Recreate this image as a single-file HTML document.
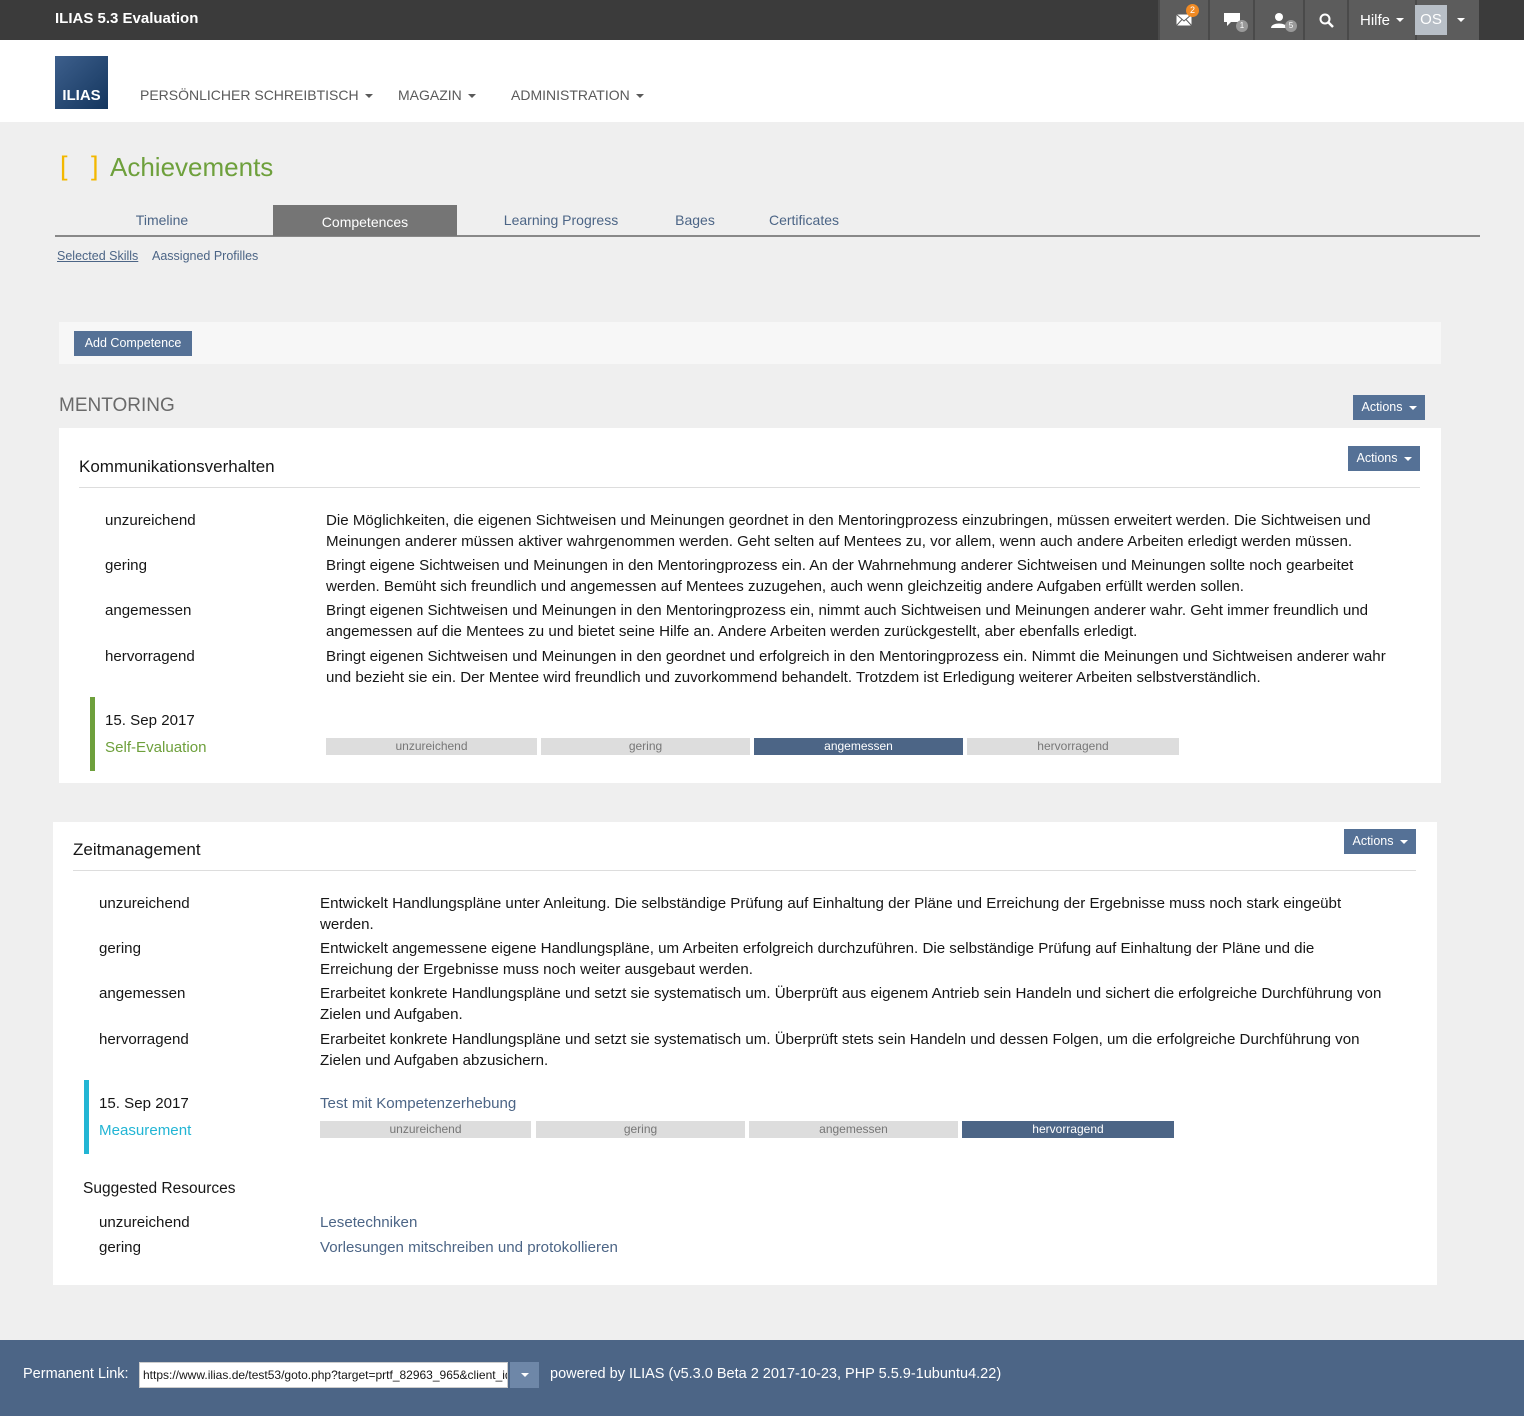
<!DOCTYPE html>
<html><head><meta charset="utf-8"><style>
*{margin:0;padding:0;box-sizing:border-box}
body{width:1524px;height:1416px;background:#efefef;font-family:"Liberation Sans",sans-serif;color:#161616;position:relative;overflow:hidden}
.a{position:absolute}
.top{left:0;top:0;width:1524px;height:40px;background:#3b3b3b}
.tb{top:0;height:40px;background:#5c5c5c;border-left:2px solid #4a4a4a;color:#fff;display:flex;align-items:center;justify-content:center;font-size:15px}
.hdr{left:0;top:40px;width:1524px;height:82px;background:#fff}
.nav{top:87px;font-size:14px;color:#5a5a5a}
.caret{display:inline-block;border-left:4px solid transparent;border-right:4px solid transparent;border-top:4px solid currentColor;vertical-align:middle;margin-left:6px}
.tab{top:205px;height:31px;font-size:14px;color:#4c6586;text-align:center;line-height:31px}
.btn{background:#557196;color:#fff;font-size:12.5px;text-align:center;line-height:24px;height:25px}
.panel{background:#fff}
.row{font-size:15.1px;line-height:20.5px}
.bar{height:17px;background:#ddd;color:#777;font-size:12px;text-align:center;line-height:17px}
.bar.on{background:#4c6586;color:#fff}
.lnk{color:#4c6586}
.bd{position:absolute;border-radius:50%;background:#999;font-size:8px;text-align:center;color:#fff}
</style></head><body>
<div class="a top"></div>
<div class="a" style="left:55px;top:10px;color:#fff;font-weight:bold;font-size:15px">ILIAS 5.3 Evaluation</div>
<div class="a tb" style="left:1158px;width:50px"><svg width="16" height="12" viewBox="0 0 16 12"><rect x="0.5" y="0.5" width="15" height="11" fill="#fff"/><path d="M0.5 0.5L8 7L15.5 0.5M0.5 11.5L6 5.5M15.5 11.5L10 5.5" stroke="#5c5c5c" fill="none"/></svg><span class="bd" style="left:26px;top:4px;width:13px;height:13px;background:#f08a24;font-size:9px;line-height:13px">2</span></div>
<div class="a tb" style="left:1208px;width:45px"><svg width="16" height="14" viewBox="0 0 16 14"><path d="M0 0H16V9H7L3 13V9H0Z" fill="#fff"/></svg><span class="bd" style="left:26px;top:20px;width:12px;height:12px;line-height:12px">1</span></div>
<div class="a tb" style="left:1253px;width:50px"><svg width="16" height="15" viewBox="0 0 16 15"><circle cx="8" cy="4" r="4" fill="#fff"/><path d="M0 15C0 9 16 9 16 15Z" fill="#fff"/></svg><span class="bd" style="left:30px;top:20px;width:12px;height:12px;line-height:12px">5</span></div>
<div class="a tb" style="left:1303px;width:44px"><svg width="15" height="15" viewBox="0 0 15 15"><circle cx="6" cy="6" r="4.5" stroke="#fff" stroke-width="2" fill="none"/><path d="M9.5 9.5L14 14" stroke="#fff" stroke-width="2.5"/></svg></div>
<div class="a tb" style="left:1347px;width:68px">Hilfe<span class="caret"></span></div>
<div class="a tb" style="left:1415px;width:64px"><span style="background:#b8bfc7;width:32px;height:30px;line-height:30px;text-align:center;margin-left:-16px">OS</span><span class="caret" style="margin-left:10px"></span></div>
<div class="a hdr"></div>
<div class="a" style="left:55px;top:56px;width:53px;height:53px;background:linear-gradient(135deg,#3d5f8c,#14365e);color:#fff;font-weight:bold;font-size:15px;padding-top:31px;text-align:center">ILIAS</div>
<div class="a nav" style="left:140px">PERSÖNLICHER SCHREIBTISCH<span class="caret"></span></div>
<div class="a nav" style="left:398px">MAGAZIN<span class="caret"></span></div>
<div class="a nav" style="left:511px">ADMINISTRATION<span class="caret"></span></div>
<div class="a" style="left:60px;top:151px;font-size:27px;color:#f3b800;letter-spacing:8px">[ ]</div>
<div class="a" style="left:110px;top:152px;font-size:26px;color:#6ea03c">Achievements</div>
<div class="a" style="left:55px;top:235px;width:1425px;height:2px;background:#888"></div>
<div class="a tab" style="left:55px;width:214px">Timeline</div>
<div class="a tab" style="left:273px;width:184px;background:#757575;color:#fff;height:31px;top:205px;line-height:34px">Competences</div>
<div class="a tab" style="left:490px;width:142px">Learning Progress</div>
<div class="a tab" style="left:665px;width:60px">Bages</div>
<div class="a tab" style="left:758px;width:92px">Certificates</div>
<div class="a" style="left:57px;top:249px;font-size:12.5px;color:#4c6586;text-decoration:underline">Selected Skills</div>
<div class="a" style="left:152px;top:249px;font-size:12.5px;color:#4c6586">Aassigned Profilles</div>
<div class="a" style="left:59px;top:322px;width:1382px;height:42px;background:#f7f7f7"></div>
<div class="a btn" style="left:74px;top:331px;width:118px">Add Competence</div>
<div class="a" style="left:59px;top:395px;font-size:19px;color:#6a6a6a">MENTORING</div>
<div class="a btn" style="left:1353px;top:395px;width:72px">Actions<span class="caret"></span></div>

<div class="a panel" style="left:59px;top:428px;width:1382px;height:355px"></div>
<div class="a" style="left:79px;top:457px;font-size:17px">Kommunikationsverhalten</div>
<div class="a btn" style="left:1348px;top:446px;width:72px">Actions<span class="caret"></span></div>
<div class="a" style="left:79px;top:487px;width:1341px;height:1px;background:#ddd"></div>
<div class="a row" style="left:105px;top:511px">unzureichend</div>
<div class="a row" style="left:326px;top:511px;width:1080px">Die Möglichkeiten, die eigenen Sichtweisen und Meinungen geordnet in den Mentoringprozess einzubringen, müssen erweitert werden. Die Sichtweisen und Meinungen anderer müssen aktiver wahrgenommen werden. Geht selten auf Mentees zu, vor allem, wenn auch andere Arbeiten erledigt werden müssen.</div>
<div class="a row" style="left:105px;top:556px">gering</div>
<div class="a row" style="left:326px;top:556px;width:1080px">Bringt eigene Sichtweisen und Meinungen in den Mentoringprozess ein. An der Wahrnehmung anderer Sichtweisen und Meinungen sollte noch gearbeitet werden. Bemüht sich freundlich und angemessen auf Mentees zuzugehen, auch wenn gleichzeitig andere Aufgaben erfüllt werden sollen.</div>
<div class="a row" style="left:105px;top:601px">angemessen</div>
<div class="a row" style="left:326px;top:601px;width:1080px">Bringt eigenen Sichtweisen und Meinungen in den Mentoringprozess ein, nimmt auch Sichtweisen und Meinungen anderer wahr. Geht immer freundlich und angemessen auf die Mentees zu und bietet seine Hilfe an. Andere Arbeiten werden zurückgestellt, aber ebenfalls erledigt.</div>
<div class="a row" style="left:105px;top:647px">hervorragend</div>
<div class="a row" style="left:326px;top:647px;width:1080px">Bringt eigenen Sichtweisen und Meinungen in den geordnet und erfolgreich in den Mentoringprozess ein. Nimmt die Meinungen und Sichtweisen anderer wahr und bezieht sie ein. Der Mentee wird freundlich und zuvorkommend behandelt. Trotzdem ist Erledigung weiterer Arbeiten selbstverständlich.</div>
<div class="a" style="left:90px;top:697px;width:5px;height:74px;background:#6ea03c"></div>
<div class="a row" style="left:105px;top:711px">15. Sep 2017</div>
<div class="a row" style="left:105px;top:738px;color:#6ea03c">Self-Evaluation</div>
<div class="a bar" style="left:326px;top:738px;width:211px">unzureichend</div>
<div class="a bar" style="left:541px;top:738px;width:209px">gering</div>
<div class="a bar on" style="left:754px;top:738px;width:209px">angemessen</div>
<div class="a bar" style="left:967px;top:738px;width:212px">hervorragend</div>

<div class="a panel" style="left:53px;top:822px;width:1384px;height:463px"></div>
<div class="a" style="left:73px;top:840px;font-size:17px">Zeitmanagement</div>
<div class="a btn" style="left:1344px;top:829px;width:72px">Actions<span class="caret"></span></div>
<div class="a" style="left:73px;top:870px;width:1343px;height:1px;background:#ddd"></div>
<div class="a row" style="left:99px;top:894px">unzureichend</div>
<div class="a row" style="left:320px;top:894px;width:1030px">Entwickelt Handlungspläne unter Anleitung. Die selbständige Prüfung auf Einhaltung der Pläne und Erreichung der Ergebnisse muss noch stark eingeübt werden.</div>
<div class="a row" style="left:99px;top:939px">gering</div>
<div class="a row" style="left:320px;top:939px;width:1030px">Entwickelt angemessene eigene Handlungspläne, um Arbeiten erfolgreich durchzuführen. Die selbständige Prüfung auf Einhaltung der Pläne und die Erreichung der Ergebnisse muss noch weiter ausgebaut werden.</div>
<div class="a row" style="left:99px;top:984px">angemessen</div>
<div class="a row" style="left:320px;top:984px;width:1085px">Erarbeitet konkrete Handlungspläne und setzt sie systematisch um. Überprüft aus eigenem Antrieb sein Handeln und sichert die erfolgreiche Durchführung von Zielen und Aufgaben.</div>
<div class="a row" style="left:99px;top:1030px">hervorragend</div>
<div class="a row" style="left:320px;top:1030px;width:1080px">Erarbeitet konkrete Handlungspläne und setzt sie systematisch um. Überprüft stets sein Handeln und dessen Folgen, um die erfolgreiche Durchführung von Zielen und Aufgaben abzusichern.</div>
<div class="a" style="left:84px;top:1080px;width:5px;height:74px;background:#22b5d4"></div>
<div class="a row" style="left:99px;top:1094px">15. Sep 2017</div>
<div class="a row" style="left:99px;top:1121px;color:#22b5d4">Measurement</div>
<div class="a row lnk" style="left:320px;top:1094px">Test mit Kompetenzerhebung</div>
<div class="a bar" style="left:320px;top:1121px;width:211px">unzureichend</div>
<div class="a bar" style="left:536px;top:1121px;width:209px">gering</div>
<div class="a bar" style="left:749px;top:1121px;width:209px">angemessen</div>
<div class="a bar on" style="left:962px;top:1121px;width:212px">hervorragend</div>
<div class="a" style="left:83px;top:1180px;font-size:15.5px">Suggested Resources</div>
<div class="a row" style="left:99px;top:1213px">unzureichend</div>
<div class="a row lnk" style="left:320px;top:1213px">Lesetechniken</div>
<div class="a row" style="left:99px;top:1238px">gering</div>
<div class="a row lnk" style="left:320px;top:1238px">Vorlesungen mitschreiben und protokollieren</div>

<div class="a" style="left:0;top:1340px;width:1524px;height:76px;background:#4c6586"></div>
<div class="a" style="left:23px;top:1366px;color:#fff;font-size:14.5px">Permanent Link:</div>
<div class="a" style="left:139px;top:1362px;width:369px;height:26px;background:#fff;border:1px solid #ccc;font-size:12px;line-height:24px;padding-left:3px;overflow:hidden;white-space:nowrap">https://www.ilias.de/test53/goto.php?target=prtf_82963_965&amp;client_id=test53</div>
<div class="a" style="left:510px;top:1362px;width:29px;height:26px;background:#6e87a8;color:#fff;text-align:center;line-height:26px"><span class="caret" style="margin:0"></span></div>
<div class="a" style="left:550px;top:1366px;color:#fff;font-size:14.5px">powered by ILIAS (v5.3.0 Beta 2 2017-10-23, PHP 5.5.9-1ubuntu4.22)</div>
</body></html>
